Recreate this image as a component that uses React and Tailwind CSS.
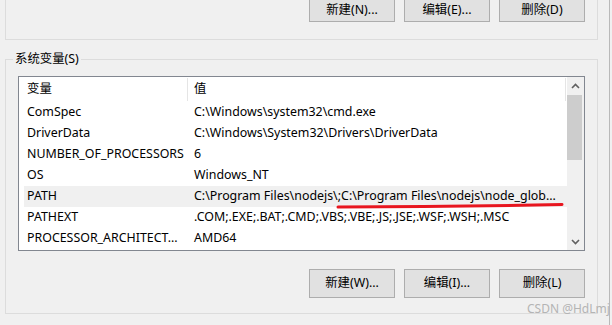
import React from 'react';

const rows = [
  { name: 'ComSpec', value: 'C:\\Windows\\system32\\cmd.exe' },
  { name: 'DriverData', value: 'C:\\Windows\\System32\\Drivers\\DriverData' },
  { name: 'NUMBER_OF_PROCESSORS', value: '6' },
  { name: 'OS', value: 'Windows_NT' },
  { name: 'PATH', value: 'C:\\Program Files\\nodejs\\;C:\\Program Files\\nodejs\\node_glob...', selected: true },
  { name: 'PATHEXT', value: '.COM;.EXE;.BAT;.CMD;.VBS;.VBE;.JS;.JSE;.WSF;.WSH;.MSC' },
  { name: 'PROCESSOR_ARCHITECT...', value: 'AMD64' },
];

const WinButton = ({ children, className = '' }) => (
  <button
    className={`w-[86px] bg-[#e1e1e1] border border-[#adadad] text-[12.4px] text-black flex items-center justify-center ${className}`}
  >
    {children}
  </button>
);

const ScrollBar = () => (
  <div className="w-[17px] flex flex-col bg-[#f0f0f0]">
    <div className="h-[17px] flex items-center justify-center">
      <svg width="9" height="6" viewBox="0 0 9 6">
        <path d="M1 5 L4.5 1.5 L8 5" fill="none" stroke="#606060" strokeWidth="1.6" />
      </svg>
    </div>
    <div className="mt-[1px] h-[65px] w-[15px] bg-[#cdcdcd]" />
    <div className="flex-1" />
    <div className="h-[17px] flex items-center justify-center">
      <svg width="9" height="6" viewBox="0 0 9 6">
        <path d="M1 1 L4.5 4.5 L8 1" fill="none" stroke="#606060" strokeWidth="1.6" />
      </svg>
    </div>
  </div>
);

export default function App() {
  return (
    <div
      className="relative w-[612px] h-[325px] overflow-hidden bg-[#f0f0f0] text-black"
      style={{ fontFamily: '"Noto Sans", "Noto Sans CJK SC", sans-serif' }}
    >
      <div className="w-[610px] h-full border-r border-[#b9b9b9]">
        {/* user variables group (cut off at the top) */}
        <div className="ml-[5px] w-[593px] h-[40px] border border-t-0 border-[#dcdcdc] flex gap-[9px] pl-[303px]">
          <WinButton className="h-[22px] border-t-0">新建(N)...</WinButton>
          <WinButton className="h-[22px] border-t-0">编辑(E)...</WinButton>
          <WinButton className="h-[22px] border-t-0">删除(D)</WinButton>
        </div>

        {/* system variables group */}
        <div className="relative mt-[19px] ml-[5px] w-[593px] h-[255px] border border-[#dcdcdc] pl-[12px] pt-[16px]">
          <span className="absolute left-[7px] top-[-9px] px-[2px] bg-[#f0f0f0] text-[12.4px] leading-[16px]">
            系统变量(S)
          </span>

          <div className="w-[567px] h-[175px] border border-[#828790] bg-white flex">
            <div className="flex-1 pl-[5px] text-[12.4px]">
              <div className="h-[25px] flex">
                <div className="w-[164px] pl-[3px] flex items-center border-r border-[#e5e5e5] my-[1px]">变量</div>
                <div className="w-[378px] pl-[6px] flex items-center border-r border-[#e5e5e5] my-[1px]">值</div>
              </div>
              {rows.map((r) => (
                <div key={r.name} className={`h-[21px] flex items-center ${r.selected ? 'bg-[#f0f0f0]' : ''}`}>
                  <div className="w-[164px] pl-[3px] whitespace-nowrap overflow-hidden text-ellipsis">{r.name}</div>
                  <div className="w-[378px] pl-[6px] whitespace-nowrap overflow-hidden text-ellipsis">{r.value}</div>
                </div>
              ))}
            </div>
            <ScrollBar />
          </div>

          <div className="mt-[18px] flex gap-[9px] pl-[291px]">
            <WinButton className="h-[29px]">新建(W)...</WinButton>
            <WinButton className="h-[29px]">编辑(I)...</WinButton>
            <WinButton className="h-[29px]">删除(L)</WinButton>
          </div>
        </div>
      </div>

      {/* red hand-drawn underline */}
      <svg className="absolute left-0 top-0 pointer-events-none" width="612" height="325">
        <path d="M338 207 Q450 207 562 204.5" fill="none" stroke="#e8161f" strokeWidth="3" strokeLinecap="round" />
      </svg>

      {/* watermark */}
      <span className="absolute left-[527px] top-[301px] text-[12px] leading-[16px] text-[#b4b4b4]">
        CSDN @HdLmj
      </span>
    </div>
  );
}
